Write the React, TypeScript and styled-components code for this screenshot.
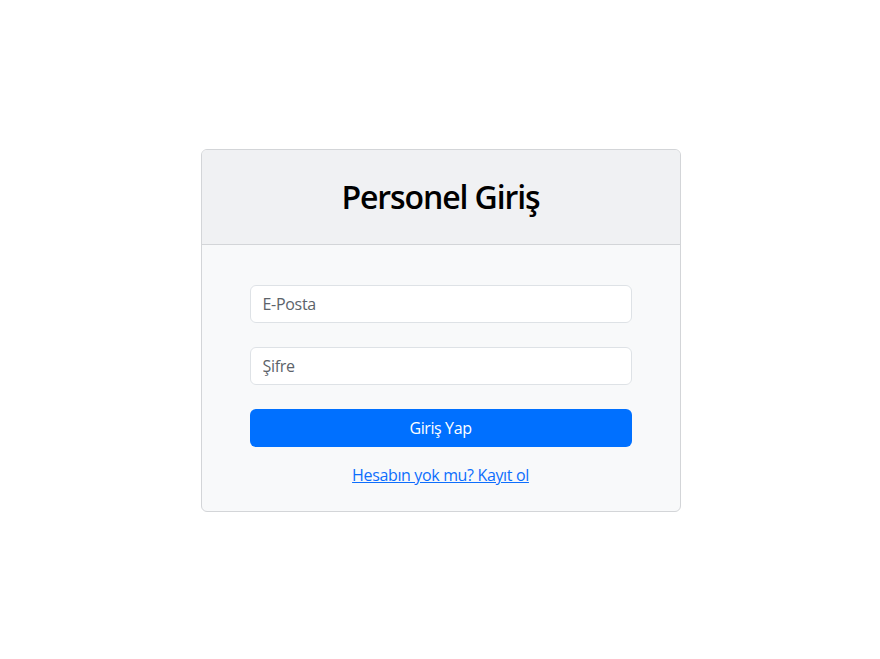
import React from "react";
import styled, { createGlobalStyle } from "styled-components";

const Global = createGlobalStyle`
  html, body { margin: 0; padding: 0; background: #fff; }
  body { font-family: "Open Sans", "Noto Sans", sans-serif; color: #212529; }
  * { box-sizing: border-box; }
`;

const Page = styled.div`
  min-height: 659px;
  display: flex;
  align-items: center;
  justify-content: center;
  padding: 2px 0 0 1px;
`;

const Card = styled.div`
  width: 480px;
  border: 1px solid #d3d5d8;
  border-radius: 6px;
  overflow: hidden;
  background: #f8f9fa;
`;

const Header = styled.div`
  background: #f0f1f3;
  border-bottom: 1px solid #d3d5d8;
  padding: 28px 16px;
  text-align: center;
`;

const Title = styled.h1`
  margin: 0;
  font-size: 32px;
  line-height: 38px;
  font-weight: 600;
  letter-spacing: -1.1px;
  color: #000;
`;

const Body = styled.form`
  padding: 40px 48px 24px;
  display: flex;
  flex-direction: column;
`;

const Input = styled.input`
  height: 38px;
  width: 100%;
  border: 1px solid #dee2e6;
  border-radius: 6px;
  background: #fff;
  padding: 6px 12px;
  font-family: inherit;
  font-size: 16px;
  letter-spacing: -0.3px;
  color: #212529;
  margin-bottom: 24px;
  outline: none;
  &::placeholder { color: #5c636a; }
`;

const Button = styled.button`
  height: 38px;
  width: 100%;
  border: none;
  border-radius: 6px;
  background: #0070ff;
  color: #fff;
  font-family: inherit;
  font-size: 16px;
  letter-spacing: -0.4px;
  cursor: pointer;
`;

const LinkRow = styled.div`
  margin-top: 16px;
  text-align: center;
  line-height: 24px;
`;

const Link = styled.a`
  color: #0d6efd;
  font-size: 16px;
  letter-spacing: -0.35px;
  text-decoration: underline;
`;

export default function App() {
  return (
    <>
      <Global />
      <Page>
        <Card>
          <Header>
            <Title>Personel Giriş</Title>
          </Header>
          <Body onSubmit={(e) => e.preventDefault()}>
            <Input type="email" placeholder="E-Posta" />
            <Input type="password" placeholder="Şifre" />
            <Button type="submit">Giriş Yap</Button>
            <LinkRow>
              <Link href="#">Hesabın yok mu? Kayıt ol</Link>
            </LinkRow>
          </Body>
        </Card>
      </Page>
    </>
  );
}
